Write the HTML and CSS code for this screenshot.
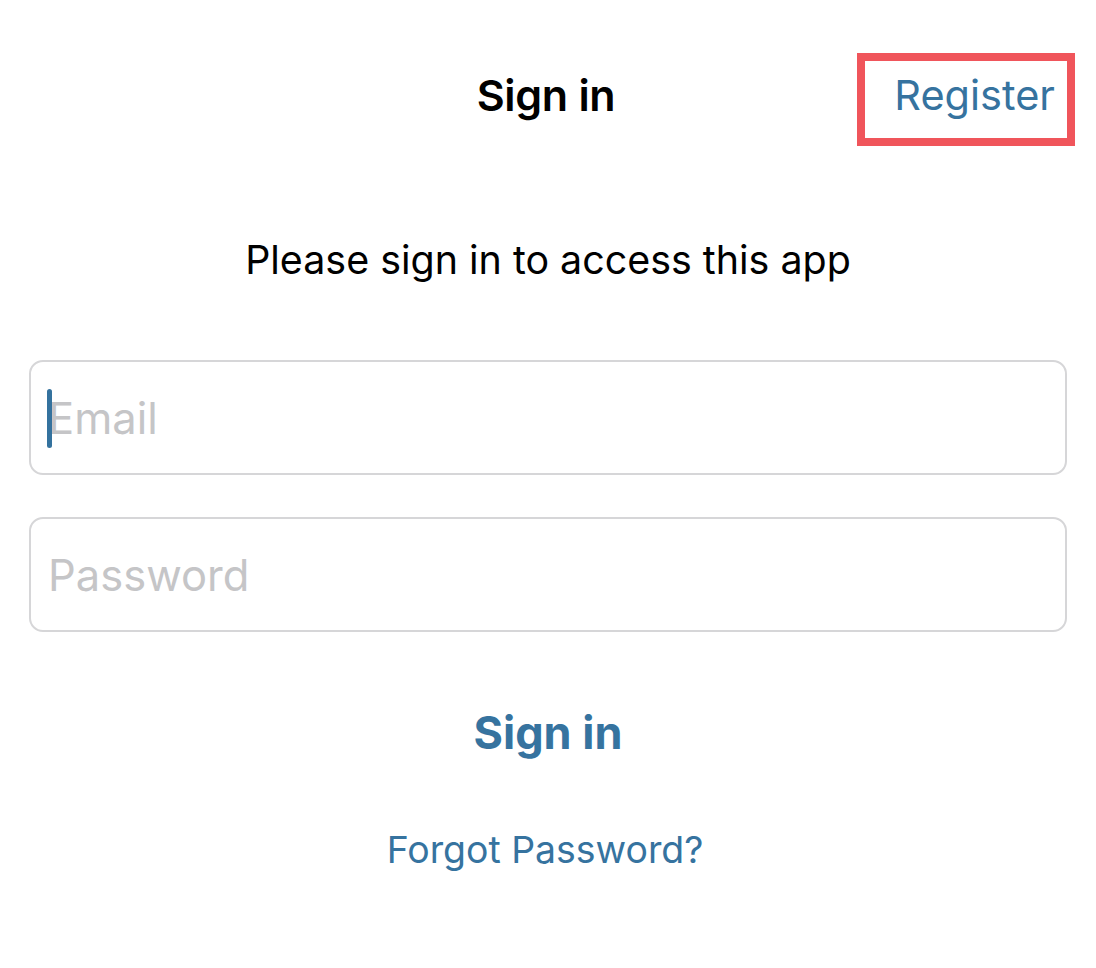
FILE: index.html
```html
<!DOCTYPE html>
<html lang="en">
<head>
<meta charset="utf-8">
<title>Sign in</title>
<link rel="stylesheet" href="styles.css">
</head>
<body>
<div class="screen">
  <header class="navbar">
    <div class="nav-side"></div>
    <h1 class="nav-title">Sign in</h1>
    <div class="nav-side nav-right">
      <span class="register-box"><a class="register" href="#">Register</a></span>
    </div>
  </header>
  <main class="content">
    <p class="intro">Please sign in to access this app</p>
    <div class="field field-focused">
      <span class="caret"></span>
      <span class="placeholder">Email</span>
    </div>
    <div class="field">
      <span class="placeholder">Password</span>
    </div>
    <button class="signin-btn" type="button">Sign in</button>
    <a class="forgot" href="#">Forgot Password?</a>
  </main>
</div>
</body>
</html>
```

FILE: styles.css
```css
* { box-sizing: border-box; }
html, body {
  margin: 0;
  padding: 0;
  background: #ffffff;
}
body {
  font-family: Inter, "Noto Sans", "Liberation Sans", sans-serif;
  color: #000;
}
.screen {
  width: 1096px;
  min-height: 968px;
}
.navbar {
  display: grid;
  grid-template-columns: 1fr auto 1fr;
  align-items: center;
  height: 146px;
  padding-top: 53px;
}
.nav-title {
  margin: 0 4px 8px 0;
  font-size: 43px;
  font-weight: 600;
  letter-spacing: -0.3px;
  line-height: 85px;
  text-align: center;
}
.nav-right {
  display: flex;
  justify-content: flex-end;
}
.register-box {
  display: block;
  height: 93px;
  margin-right: 21px;
  border: 8px solid #f0555b;
  padding: 0 12px 8px 29px;
}
.register {
  display: block;
  line-height: 69px;
  font-size: 41.5px;
  color: #36739f;
  text-decoration: none;
}
.content {
  display: flex;
  flex-direction: column;
  align-items: center;
  padding: 0 29px;
}
.intro {
  margin: 88px 0 0;
  font-size: 39.4px;
  line-height: 52px;
}
.field {
  position: relative;
  align-self: stretch;
  height: 115px;
  border: 2px solid #d6d6d8;
  border-radius: 14px;
  display: flex;
  align-items: center;
  padding-left: 17px;
  margin-top: 42px;
}
.field-focused {
  margin-top: 74px;
}
.placeholder {
  font-size: 43.5px;
  color: #c5c5c7;
}
.caret {
  position: absolute;
  left: 16px;
  top: 27px;
  width: 5px;
  height: 59px;
  border-radius: 3px;
  background: #34729e;
}
.signin-btn {
  margin-top: 71px;
  border: 0;
  background: none;
  padding: 0;
  font-family: inherit;
  font-size: 45px;
  font-weight: 700;
  color: #36739f;
  line-height: 60px;
}
.forgot {
  margin: 63px 6px 0 0;
  font-size: 37.4px;
  line-height: 48px;
  color: #36739f;
  text-decoration: none;
}
```
